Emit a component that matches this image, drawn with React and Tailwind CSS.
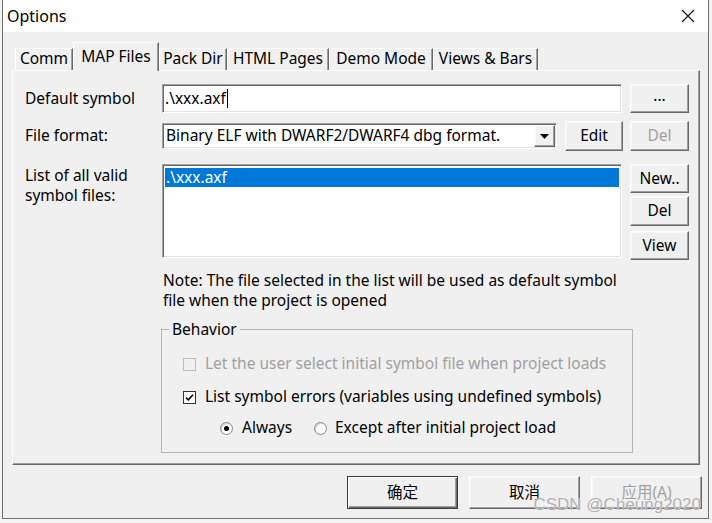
import React from "react";

const RAISED =
  "bg-[#f0f0f0] border border-t-white border-l-white border-r-[#696969] border-b-[#696969] shadow-[inset_-1px_-1px_0_#a0a0a0,inset_1px_1px_0_#f8f8f8] flex items-center justify-center";
const SUNKEN =
  "bg-white border border-t-[#a0a0a0] border-l-[#a0a0a0] border-r-white border-b-white shadow-[inset_1px_1px_0_#696969,inset_-1px_-1px_0_#e3e3e3]";

function Tab({ label, w, selected }) {
  if (selected) {
    return (
      <div
        className={`${w} h-[29px] -mb-[1px] bg-[#f0f0f0] border-t border-l border-r border-t-white border-l-white border-r-[#696969] shadow-[inset_-1px_0_0_#a0a0a0] flex items-start justify-center pt-[2px] relative z-10`}
      >
        <span className="leading-[22px]">{label}</span>
      </div>
    );
  }
  return (
    <div
      className={`${w} h-[22px] bg-[#f0f0f0] border-t border-l border-r border-t-white border-l-white border-r-[#696969] shadow-[inset_-1px_0_0_#a0a0a0] flex items-start justify-center`}
    >
      <span className="leading-[18px]">{label}</span>
    </div>
  );
}

function CheckBox({ checked, disabled }) {
  return (
    <div
      className={
        disabled
          ? "w-[13px] h-[13px] border border-[#bcbcbc] bg-[#f0f0f0] shrink-0"
          : "w-[13px] h-[13px] border border-[#333333] bg-white shrink-0 flex items-center justify-center"
      }
    >
      {checked && (
        <svg width="9" height="9" viewBox="0 0 9 9">
          <path d="M1 4.5 L3.3 6.8 L8 1.8" fill="none" stroke="#000" strokeWidth="1.6" />
        </svg>
      )}
    </div>
  );
}

function Radio({ checked }) {
  return (
    <div className="w-[13px] h-[13px] rounded-full border border-[#888888] bg-white shrink-0 flex items-center justify-center shadow-[inset_1px_1px_0_#d0d0d0]">
      {checked && <div className="w-[5px] h-[5px] rounded-full bg-black" />}
    </div>
  );
}

export default function App() {
  return (
    <div
      className="w-[712px] h-[523px] bg-[#f3f3f3] relative overflow-hidden text-[15.5px] text-black"
      style={{ fontFamily: '"Noto Sans", "Noto Sans CJK SC", sans-serif' }}
    >
      <div className="ml-[2px] w-[707px] h-[519px] bg-[#f0f0f0] border-l border-r border-b border-[#707070] flex flex-col">
        {/* title bar */}
        <div className="h-[32px] bg-white flex items-center justify-between pl-[4px] pr-[13px] shrink-0">
          <span className="text-[16px] leading-[20px]">Options</span>
          <svg width="14" height="14" viewBox="0 0 14 14">
            <path d="M1 1 L13 13 M13 1 L1 13" stroke="#111" strokeWidth="1.1" fill="none" />
          </svg>
        </div>

        <div className="pl-[9px] pt-[10px] flex flex-col">
          {/* tabs */}
          <div className="flex items-end h-[28px] pl-[3px]">
            <Tab label="Comm" w="w-[58px]" />
            <Tab label="MAP Files" w="w-[86px]" selected />
            <Tab label="Pack Dir" w="w-[68px]" />
            <Tab label="HTML Pages" w="w-[102px]" />
            <Tab label="Demo Mode" w="w-[104px]" />
            <Tab label="Views & Bars" w="w-[105px]" />
          </div>

          {/* panel */}
          <div className="w-[688px] h-[395px] border border-t-white border-l-white border-r-[#696969] border-b-[#696969] shadow-[inset_-1px_-1px_0_#a0a0a0] pl-[12px] pt-[13px] flex flex-col">
            {/* row 1 */}
            <div className="flex items-center h-[29px]">
              <div className="w-[137px]">Default symbol</div>
              <div className={`${SUNKEN} w-[460px] h-[29px] flex items-center pl-[2px]`}>
                <span>.\xxx.axf</span>
                <span className="w-[1px] h-[19px] bg-black ml-[1px]" />
              </div>
              <div className={`${RAISED} ml-[8px] w-[59px] h-[29px]`}>
                <span className="leading-none -mt-[6px]">...</span>
              </div>
            </div>

            {/* row 2 */}
            <div className="flex items-center h-[30px] mt-[8px]">
              <div className="w-[137px]">File format:</div>
              <div className={`${SUNKEN} w-[395px] h-[26px] flex items-center justify-between pl-[3px] pr-[1px]`}>
                <span className="whitespace-nowrap">Binary ELF with DWARF2/DWARF4 dbg format.</span>
                <div className={`${RAISED} w-[21px] h-[22px]`}>
                  <svg width="9" height="5" viewBox="0 0 9 5">
                    <path d="M0 0 L9 0 L4.5 5 Z" fill="#000" />
                  </svg>
                </div>
              </div>
              <div className={`${RAISED} ml-[8px] w-[58px] h-[30px]`}>Edit</div>
              <div className={`${RAISED} ml-[7px] w-[59px] h-[30px] text-[#a0a0a0]`}>Del</div>
            </div>

            {/* row 3 */}
            <div className="flex items-start mt-[13px]">
              <div className="w-[137px] leading-[20px] pt-[1px]">
                List of all valid
                <br />
                symbol files:
              </div>
              <div className={`${SUNKEN} w-[460px] h-[94px] p-[2px]`}>
                <div className="h-[19px] bg-[#0078d7] text-white flex items-center pl-[1px] mt-[1px]">
                  .\xxx.axf
                </div>
              </div>
              <div className="ml-[8px] flex flex-col">
                <div className={`${RAISED} w-[59px] h-[29px]`}>New..</div>
                <div className={`${RAISED} w-[59px] h-[30px] mt-[3px]`}>Del</div>
                <div className={`${RAISED} w-[59px] h-[29px] mt-[5px]`}>View</div>
              </div>
            </div>

            {/* note */}
            <div className="ml-[138px] mt-[10px] leading-[20px]">
              Note: The file selected in the list will be used as default symbol
              <br />
              file when the project is opened
            </div>

            {/* group box */}
            <fieldset className="ml-[136px] mt-[9px] w-[472px] border border-[#b4b4b4] pb-[14px]">
              <legend className="ml-[7px] px-[3px] leading-[20px]">Behavior</legend>
              <div className="flex items-center h-[20px] mt-[15px] pl-[21px]">
                <CheckBox disabled />
                <span className="ml-[9px] text-[#a0a0a0] whitespace-nowrap">
                  Let the user select initial symbol file when project loads
                </span>
              </div>
              <div className="flex items-center h-[20px] mt-[13px] pl-[21px]">
                <CheckBox checked />
                <span className="ml-[9px] whitespace-nowrap">
                  List symbol errors (variables using undefined symbols)
                </span>
              </div>
              <div className="flex items-center h-[20px] mt-[11px] pl-[58px]">
                <div className="w-[94px] flex items-center">
                  <Radio checked />
                  <span className="ml-[9px]">Always</span>
                </div>
                <Radio />
                <span className="ml-[8px] whitespace-nowrap">Except after initial project load</span>
              </div>
            </fieldset>
          </div>

          {/* bottom buttons */}
          <div className="flex justify-end gap-[11px] mt-[11px] pr-[6px]">
            <div className="w-[111px] h-[33px] bg-[#f0f0f0] border border-[#3c3c3c] shadow-[inset_1px_1px_0_#ffffff,inset_-1px_-1px_0_#696969,inset_-2px_-2px_0_#a0a0a0] flex items-center justify-center">
              确定
            </div>
            <div className={`${RAISED} w-[111px] h-[33px]`}>取消</div>
            <div className={`${RAISED} w-[111px] h-[33px] text-[#a0a0a0]`}>应用(A)</div>
          </div>
        </div>
      </div>

      {/* watermark */}
      <div
        className="absolute right-[11px] bottom-[8px] text-[17px] leading-[20px] text-[#b0b0b0] [text-shadow:0_0_1px_#ffffff]"
        style={{ fontFamily: '"Liberation Sans", sans-serif' }}
      >
        CSDN @Cheung2020
      </div>
    </div>
  );
}
